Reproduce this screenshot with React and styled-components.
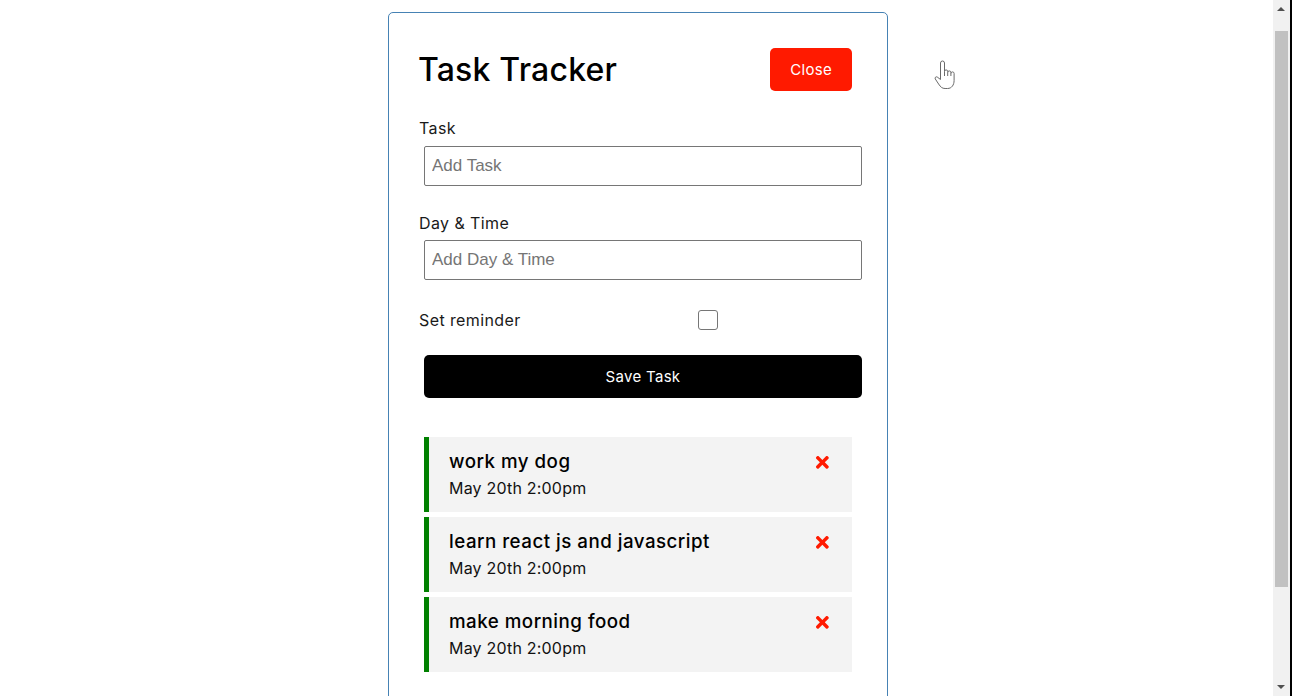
import styled, { createGlobalStyle } from 'styled-components';
import { FaTimes } from 'react-icons/fa';

const GlobalStyle = createGlobalStyle`
  * {
    box-sizing: border-box;
    margin: 0;
    padding: 0;
  }
  body {
    font-family: Inter, 'Open Sans', sans-serif;
    line-height: 1.5;
    color: #111;
    background: #fff;
  }
  ::-webkit-scrollbar {
    display: none;
  }
`;

const Page = styled.div`
  padding-right: 16px;
`;

const Container = styled.div`
  max-width: 500px;
  margin: 12px auto 30px;
  min-height: 300px;
  border: 1px solid steelblue;
  border-radius: 5px;
  padding: 30px;
  overflow: auto;
`;

const Header = styled.header`
  display: flex;
  justify-content: space-between;
  align-items: center;
  margin-bottom: 20px;
`;

const Title = styled.h1`
  font-size: 32px;
  font-weight: 500;
  line-height: 48px;
  color: #000;
  letter-spacing: 0.2px;
  margin-left: -1px;
`;

const Button = styled.button`
  display: ${(p) => (p.$block ? 'block' : 'inline-block')};
  width: ${(p) => (p.$block ? '100%' : 'auto')};
  background: ${(p) => p.$color || '#000'};
  color: #fff;
  border: none;
  padding: 10px 20px;
  margin: 5px;
  border-radius: 5px;
  font-family: inherit;
  font-size: 15px;
  line-height: 23px;
  letter-spacing: 0.3px;
  cursor: pointer;
`;

const Form = styled.form`
  margin-bottom: 39px;
`;

const Field = styled.div`
  margin: 20px 0;
`;

const CheckField = styled(Field)`
  display: flex;
  align-items: center;
`;

const Label = styled.label`
  display: block;
  font-size: 16px;
  line-height: 24.5px;
  color: #1a1a1a;
  letter-spacing: 0.4px;
  flex: 1;
`;

const Input = styled.input`
  width: 100%;
  height: 40px;
  margin: 5px;
  padding: 3px 7px;
  font-family: 'Liberation Sans', Arial, sans-serif;
  font-size: 17px;
  border: 1px solid #767676;
  border-radius: 2px;
  outline: none;
  &::placeholder {
    color: #757575;
  }
`;

const CheckWrap = styled.span`
  flex: 2;
  display: flex;
  justify-content: center;
  padding: 5px;
`;

const Check = styled.input`
  appearance: none;
  width: 20px;
  height: 20px;
  border: 1px solid #767676;
  border-radius: 3px;
  background: #fff;
  margin-left: -2px;
`;

const TaskItem = styled.div`
  background: #f3f3f3;
  margin: 5px;
  padding: 11px 20px 12px;
  border-left: ${(p) => (p.$reminder ? '5px solid green' : 'none')};
  cursor: pointer;
`;

const TaskTitle = styled.h3`
  display: flex;
  align-items: center;
  justify-content: space-between;
  font-size: 18.72px;
  font-weight: 500;
  line-height: 28px;
  color: #000;
  letter-spacing: 0.5px;

  svg {
    color: #ff1a00;
  }
`;

const TaskDay = styled.p`
  font-size: 16px;
  line-height: 24px;
  color: #111;
  letter-spacing: 0.2px;
`;

const Pointer = styled.svg`
  position: fixed;
  left: 933px;
  top: 59px;
  pointer-events: none;
`;

const ScrollRail = styled.div`
  position: fixed;
  top: 0;
  bottom: 0;
  right: 2px;
  width: 17px;
  background: #f1f1f1;
`;

const ScrollThumb = styled.div`
  position: absolute;
  top: 31px;
  left: 2px;
  right: 2px;
  height: 556px;
  background: #c1c1c1;
`;

const ScrollArrow = styled.span`
  position: absolute;
  left: 4px;
  width: 0;
  height: 0;
  border-left: 4px solid transparent;
  border-right: 4px solid transparent;
  ${(p) =>
    p.$down
      ? 'bottom: 7px; border-top: 4px solid #505050;'
      : 'top: 7px; border-bottom: 4px solid #505050;'}
`;

const WindowEdge = styled.div`
  position: fixed;
  top: 0;
  bottom: 0;
  right: 0;
  width: 2px;
  background: #000;
`;

const tasks = [
  { id: 1, text: 'work my dog', day: 'May 20th 2:00pm', reminder: true },
  { id: 2, text: 'learn react js and javascript', day: 'May 20th 2:00pm', reminder: true },
  { id: 3, text: 'make morning food', day: 'May 20th 2:00pm', reminder: true },
];

export default function App() {
  return (
    <Page>
      <GlobalStyle />
      <Container>
        <Header>
          <Title>Task Tracker</Title>
          <Button $color='#ff1a00'>Close</Button>
        </Header>
        <Form onSubmit={(e) => e.preventDefault()}>
          <Field>
            <Label>Task</Label>
            <Input type='text' placeholder='Add Task' />
          </Field>
          <Field>
            <Label>Day &amp; Time</Label>
            <Input type='text' placeholder='Add Day & Time' />
          </Field>
          <CheckField>
            <Label>Set reminder</Label>
            <CheckWrap>
              <Check type='checkbox' />
            </CheckWrap>
          </CheckField>
          <Button $block type='submit'>Save Task</Button>
        </Form>
        {tasks.map((task) => (
          <TaskItem key={task.id} $reminder={task.reminder}>
            <TaskTitle>
              {task.text} <FaTimes />
            </TaskTitle>
            <TaskDay>{task.day}</TaskDay>
          </TaskItem>
        ))}
      </Container>
      <Pointer width='26' height='34' viewBox='0 0 26 34'>
        <path
          d='M7.5 17V4a2 2 0 0 1 4 0v8.5a1.6 1.6 0 0 1 3.2 0v1a1.6 1.6 0 0 1 3.2 0v1a1.6 1.6 0 0 1 3.2 0v7c0 4.5-2.5 8-6.5 8h-2.5c-3 0-4.5-1.5-6.5-4.5L2.3 20c-.8-1.2.6-2.8 1.9-2L7.5 20.5Z'
          fill='#fff'
          stroke='#6a6a6a'
          strokeWidth='1'
          strokeLinejoin='round'
        />
        <path d='M11.5 12.5V17M14.7 13.5V17M17.9 14.5V17' stroke='#6a6a6a' strokeWidth='1' />
      </Pointer>
      <ScrollRail>
        <ScrollArrow />
        <ScrollThumb />
        <ScrollArrow $down />
      </ScrollRail>
      <WindowEdge />
    </Page>
  );
}
